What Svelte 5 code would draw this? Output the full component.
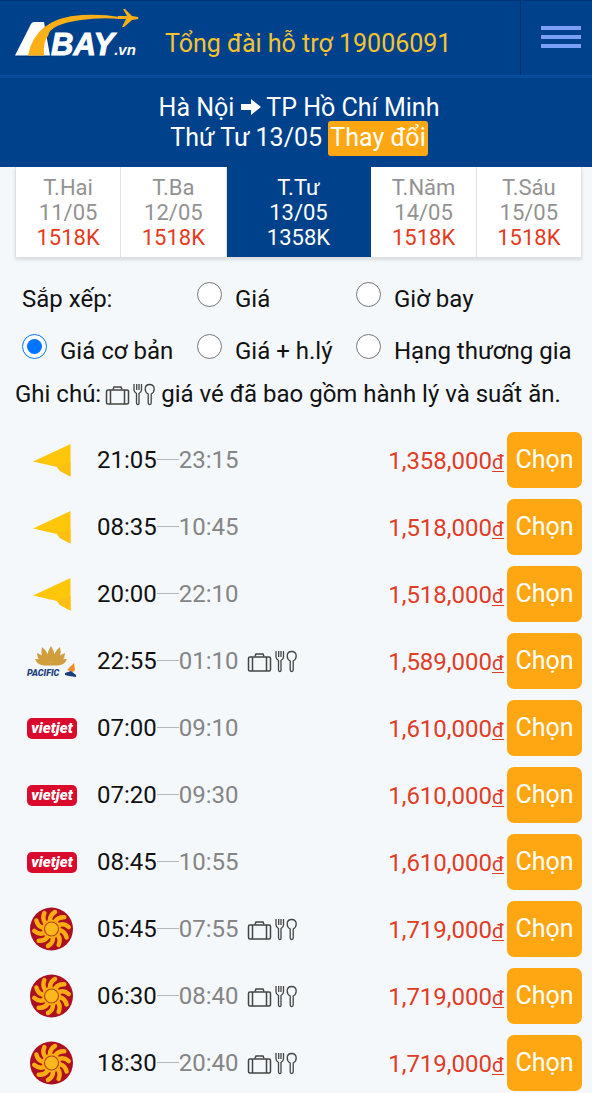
<script lang="ts">
	type Airline = 'bamboo' | 'pacific' | 'vietjet' | 'vna';

	interface Flight {
		airline: Airline;
		depart: string;
		arrive: string;
		price: string;
		extras?: boolean;
	}

	const days = [
		{ name: 'T.Hai', date: '11/05', price: '1518K' },
		{ name: 'T.Ba', date: '12/05', price: '1518K' },
		{ name: 'T.Tư', date: '13/05', price: '1358K' },
		{ name: 'T.Năm', date: '14/05', price: '1518K' },
		{ name: 'T.Sáu', date: '15/05', price: '1518K' }
	];

	const sorts = [
		{ id: 'price', label: 'Giá' },
		{ id: 'time', label: 'Giờ bay' },
		{ id: 'base', label: 'Giá cơ bản' },
		{ id: 'luggage', label: 'Giá + h.lý' },
		{ id: 'business', label: 'Hạng thương gia' }
	];

	const flights: Flight[] = [
		{ airline: 'bamboo', depart: '21:05', arrive: '23:15', price: '1,358,000' },
		{ airline: 'bamboo', depart: '08:35', arrive: '10:45', price: '1,518,000' },
		{ airline: 'bamboo', depart: '20:00', arrive: '22:10', price: '1,518,000' },
		{ airline: 'pacific', depart: '22:55', arrive: '01:10', price: '1,589,000', extras: true },
		{ airline: 'vietjet', depart: '07:00', arrive: '09:10', price: '1,610,000' },
		{ airline: 'vietjet', depart: '07:20', arrive: '09:30', price: '1,610,000' },
		{ airline: 'vietjet', depart: '08:45', arrive: '10:55', price: '1,610,000' },
		{ airline: 'vna', depart: '05:45', arrive: '07:55', price: '1,719,000', extras: true },
		{ airline: 'vna', depart: '06:30', arrive: '08:40', price: '1,719,000', extras: true },
		{ airline: 'vna', depart: '18:30', arrive: '20:40', price: '1,719,000', extras: true }
	];

	const petals = [0, 36, 72, 108, 144, 180, 216, 252, 288, 324];

	let activeDay = $state(2);
	let sort = $state('base');
</script>

{#snippet extrasIcon()}
	<svg class="extras" width="52" height="24" viewBox="0 0 52 24" fill="none" stroke="#444" stroke-width="1.5" role="img" aria-label="Hành lý và suất ăn">
		<rect x="1.5" y="8" width="22" height="14" rx="1.5" />
		<path d="M5.5 8v14M19.5 8v14M8 7.500 9 5h7l1 2.500" />
		<g stroke-width="1.3">
			<path d="M29 2v6q0 2 2.500 3.500V21q0 1.500 1.300 1.500T34 21v-9.500Q36.500 10 36.500 8V2M31.700 2v6M34 2v6" />
			<path d="M43.200 12v9q0 1.500 1.500 1.500t1.500-1.500v-9q3-1.500 3-5 0-4.500-4.500-4.500T40.200 7q0 3.500 3 5z" />
		</g>
	</svg>
{/snippet}

{#snippet airlineLogo(airline: Airline)}
	{#if airline === 'bamboo'}
		<svg width="52" height="44" viewBox="0 0 52 44" role="img" aria-label="Bamboo Airways">
			<path d="M7 23.500 44.500 6v32.500L34 33l-3-4z" fill="#ffc60a" />
			<path d="m31 29 13.500-5v14.500L34 33z" fill="#fdbf10" />
		</svg>
	{:else if airline === 'pacific'}
		<svg width="52" height="44" viewBox="0 0 52 44" role="img" aria-label="Pacific Airlines">
			<g fill="#d09e3c">
				<path d="M25 26q-7-9 0-19 7 10 0 19z" />
				<path d="M22 26q-9-7-6-18 8 6 8 18zM28 26q9-7 6-18-8 6-8 18z" />
				<path d="M21 26q-10-3-10-12 9 3 13 12zM29 26q10-3 10-12-9 3-13 12z" />
				<path d="M22 26Q12 28 9 20q9 0 14 5zM28 26q10 2 13-6-9 0-14 5z" />
				<path d="M15 24h20l-4 2.500H19z" />
			</g>
			<text x="1" y="37" class="pacific-name">PACIFIC</text>
			<path d="m41 31 7-7 1 7-2 2z" fill="#f28c28" />
			<path d="m39 34 6-2 5 4v2l-7-1-4-1z" fill="#1c3f7c" />
		</svg>
	{:else if airline === 'vietjet'}
		<svg width="52" height="44" viewBox="0 0 52 44" role="img" aria-label="Vietjet">
			<rect x="1" y="12" width="50" height="21" rx="5" fill="#d90a2c" />
			<text x="26" y="27" text-anchor="middle" class="vietjet-name">vietjet</text>
		</svg>
	{:else}
		<svg width="52" height="44" viewBox="0 0 52 44" role="img" aria-label="Vietnam Airlines">
			<circle cx="25.5" cy="22" r="21.5" fill="#ad0f22" />
			<g fill="none" stroke="#f9ad13" stroke-width="4.5" stroke-linecap="round">
				{#each petals as angle}
					<path d="M24 13q0-5 5-8" transform="rotate({angle} 25.5 22)" />
				{/each}
			</g>
			<circle cx="25.5" cy="22" r="9.500" fill="#f9ad13" />
			<circle cx="25.5" cy="22" r="7" fill="#f9b81c" stroke="#b8481a" stroke-width="1.2" />
		</svg>
	{/if}
{/snippet}

<div class="page">
	<header class="topbar">
		<a class="brand" href="/" aria-label="Abay.vn">
			<svg width="130" height="54" viewBox="0 0 130 54">
				<path d="M2 49 19 18h13l5 31z" fill="#012a62" opacity="0.6" />
				<path d="M1 47.500 17 16q1-2 3-2h10l6 33.500z" fill="#fff" />
				<path d="M14 47.500Q21 10 68 7q20-1 38 2v2Q87 9 67 12 36 16 34 28q-5 5-4 19.500z" fill="#fcb017" />
				<path d="M104 8h9l-4-7h2l7 7 6 1q1 1 0 2l-6 1-8 7h-2l4-8h-8z" fill="#fcb017" />
				<text x="37" y="47" class="brand-name">BAY<tspan class="brand-tld">.vn</tspan></text>
			</svg>
		</a>
		<a class="hotline" href="tel:19006091">Tổng đài hỗ trợ 19006091</a>
		<button class="menu" aria-label="Menu">
			<span></span>
			<span></span>
			<span></span>
		</button>
	</header>

	<section class="route">
		<div>
			Hà Nội
			<svg width="20" height="18" viewBox="0 0 20 18" role="img" aria-label="đến">
				<path d="M0 6h10V1l10 8-10 8v-5H0z" fill="#fff" />
			</svg>
			TP Hồ Chí Minh
		</div>
		<div>Thứ Tư 13/05 <button class="change">Thay đổi</button></div>
	</section>

	<nav class="days">
		{#each days as day, i}
			<button class="day" class:active={i === activeDay} onclick={() => (activeDay = i)}>
				<span>{day.name}</span>
				<span>{day.date}</span>
				<span class="day-price">{day.price}</span>
			</button>
		{/each}
	</nav>

	<div class="sorts" role="radiogroup" aria-labelledby="sort-title">
		<span id="sort-title">Sắp xếp:</span>
		{#each sorts as option}
			<label>
				<input type="radio" name="sort" value={option.id} bind:group={sort} />
				<span>{option.label}</span>
			</label>
		{/each}
	</div>

	<p class="note">Ghi chú: {@render extrasIcon()} giá vé đã bao gồm hành lý và suất ăn.</p>

	<table class="flights">
		<tbody>
			{#each flights as flight}
				<tr>
					<td class="logo">{@render airlineLogo(flight.airline)}</td>
					<td>
						<div class="times">
							<span>{flight.depart}</span>
							<i class="dash"></i>
							<span class="arrive">{flight.arrive}</span>
							{#if flight.extras}{@render extrasIcon()}{/if}
						</div>
					</td>
					<td class="price">{flight.price}<u>đ</u></td>
					<td class="pick"><button class="choose">Chọn</button></td>
				</tr>
			{/each}
		</tbody>
	</table>
</div>

<style>
	:global(body) {
		margin: 0;
		background: #f4f8fb;
	}

	.page {
		font-family: Roboto, 'Noto Sans', sans-serif;
		font-size: 24px;
		line-height: 30px;
		color: #111;
	}

	button {
		font: inherit;
		border: none;
		margin: 0;
		padding: 0;
		cursor: pointer;
	}

	svg {
		display: block;
	}

	.topbar {
		display: flex;
		align-items: stretch;
		height: 74px;
		background: #00418c;
		border-top: 1px solid #003577;
		border-bottom: 3px solid #054c9b;
	}

	.brand {
		width: 130px;
		padding: 7px 0 0 14px;
	}

	.brand-name {
		font: italic bold 31px 'Liberation Sans', Arial, sans-serif;
		fill: #fff;
		stroke: #fff;
		stroke-width: 1px;
	}

	.brand-tld {
		font-size: 15px;
		stroke: none;
	}

	.hotline {
		flex: 1;
		padding: 28px 0 0 21px;
		color: #f4c430;
		font-size: 25px;
		text-decoration: none;
		white-space: nowrap;
	}

	.menu {
		display: flex;
		flex-direction: column;
		align-items: center;
		gap: 5px;
		width: 72px;
		padding: 25px 0 0 8px;
		background: none;
		border-left: 1px solid #00306c;
	}

	.menu span {
		width: 40px;
		height: 4px;
		background: #7b9ff5;
	}

	.route {
		padding: 15px 0 14px 6px;
		background: #00418c;
		color: #fff;
		font-size: 25px;
		text-align: center;
	}

	.route svg {
		display: inline-block;
	}

	.change {
		height: 35px;
		margin: -3px 0;
		padding: 0 2px;
		border-radius: 3px;
		background: #ffa713;
		color: #fff;
	}

	.days {
		display: flex;
		margin: 0 10px 0 15px;
		border-left: 1px solid #dde1e4;
		box-shadow: 0 3px 3px #d9dddf;
	}

	.day {
		flex: 105;
		display: flex;
		flex-direction: column;
		align-items: center;
		padding: 8px 0 7px;
		background: #fff;
		border-right: 1px solid #e2e2e2;
		color: #929292;
		font-size: 22px;
		line-height: 25px;
	}

	.day-price {
		color: #e8391c;
	}

	.day.active {
		flex-grow: 145;
		background: #00418c;
		border-color: #00418c;
	}

	.day.active,
	.day.active .day-price {
		color: #fff;
	}

	.sorts {
		display: grid;
		grid-template-columns: 175fr 159fr 236fr;
		row-gap: 18px;
		padding: 25px 0 0 22px;
		line-height: 34px;
	}

	.sorts label {
		display: flex;
		gap: 13px;
		white-space: nowrap;
	}

	.sorts input {
		flex: none;
		width: 25px;
		height: 25px;
		margin: 0;
	}

	.note {
		display: flex;
		align-items: center;
		gap: 4px;
		margin: 11px 0 17px 15px;
		white-space: nowrap;
	}

	.flights {
		width: 100%;
		border-collapse: collapse;
	}

	.flights td {
		height: 67px;
		padding: 0;
		box-sizing: border-box;
	}

	.flights .logo {
		width: 97px;
	}

	.logo svg {
		margin-left: 26px;
	}

	.times {
		display: flex;
		align-items: center;
	}

	.times .extras {
		margin-left: 8px;
	}

	.dash {
		width: 22px;
		height: 1px;
		background: #b5b9bc;
	}

	.arrive {
		color: #858585;
	}

	.flights .price {
		padding-top: 4px;
		color: #e03c26;
		text-align: right;
	}

	.price u {
		font-size: 20px;
		text-decoration-thickness: 1px;
		text-underline-offset: 2px;
	}

	.flights .pick {
		width: 88px;
	}

	.choose {
		display: block;
		width: 75px;
		height: 56px;
		margin-left: 3px;
		border-radius: 7px;
		background: #ffa713;
		color: #fff;
		font-size: 25px;
	}

	.pacific-name {
		font: italic 900 9px Roboto, sans-serif;
		fill: #1c3f7c;
	}

	.vietjet-name {
		font: italic 900 15px Roboto, sans-serif;
		fill: #fff;
	}
</style>
